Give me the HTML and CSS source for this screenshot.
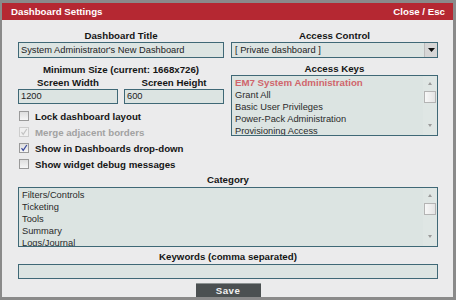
FILE: index.html
```html
<!DOCTYPE html>
<html>
<head>
<meta charset="utf-8">
<link rel="stylesheet" href="styles.css">
</head>
<body>
<div class="dialog">
  <div class="titlebar">
    <span class="title">Dashboard Settings</span>
    <span class="close">Close / Esc</span>
  </div>
  <div class="content">
    <div class="cols">
      <div class="col">
        <div class="label">Dashboard Title</div>
        <div class="field">System Administrator's New Dashboard</div>
        <div class="label minsize">Minimum Size (current: 1668x726)</div>
        <div class="sizes">
          <div class="size">
            <div class="label">Screen Width</div>
            <div class="field small">1200</div>
          </div>
          <div class="size">
            <div class="label">Screen Height</div>
            <div class="field small">600</div>
          </div>
        </div>
        <div class="checks">
          <div class="check"><span class="box"></span><span class="ctext">Lock dashboard layout</span></div>
          <div class="check disabled"><span class="box"><svg width="10" height="10" viewBox="0 0 10 10"><path d="M2.5 5.2 L4.2 7.4 L7.8 2" fill="none" stroke="#c4c4c4" stroke-width="1.2"/></svg></span><span class="ctext">Merge adjacent borders</span></div>
          <div class="check"><span class="box"><svg width="10" height="10" viewBox="0 0 10 10"><path d="M2.5 5.2 L4.2 7.4 L7.8 2" fill="none" stroke="#3a4a9c" stroke-width="1.2"/></svg></span><span class="ctext">Show in Dashboards drop-down</span></div>
          <div class="check"><span class="box"></span><span class="ctext">Show widget debug messages</span></div>
        </div>
      </div>
      <div class="col">
        <div class="label">Access Control</div>
        <div class="select"><span class="selval">[ Private dashboard ]</span><span class="selbtn"><svg width="7" height="4" viewBox="0 0 7 4"><path d="M0 0 H7 L3.5 4 Z" fill="#111"/></svg></span></div>
        <div class="label keyslabel">Access Keys</div>
        <div class="listbox keys">
          <div class="items">
            <div class="item sel">EM7 System Administration</div>
            <div class="item">Grant All</div>
            <div class="item">Basic User Privileges</div>
            <div class="item">Power-Pack Administration</div>
            <div class="item">Provisioning Access</div>
          </div>
          <div class="sbar">
            <span class="arr up"></span>
            <span class="thumb"></span>
            <span class="sfill"></span>
            <span class="arr down"></span>
          </div>
        </div>
      </div>
    </div>
    <div class="label catlabel">Category</div>
    <div class="listbox cat">
      <div class="items">
        <div class="item">Filters/Controls</div>
        <div class="item">Ticketing</div>
        <div class="item">Tools</div>
        <div class="item">Summary</div>
        <div class="item">Logs/Journal</div>
      </div>
      <div class="sbar">
        <span class="arr up"></span>
        <span class="thumb"></span>
        <span class="sfill"></span>
        <span class="arr down"></span>
      </div>
    </div>
    <div class="label kwlabel">Keywords (comma separated)</div>
    <div class="field kw"></div>
    <div class="actions"><button class="save">Save</button></div>
  </div>
</div>
</body>
</html>
```

FILE: styles.css
```css
* { box-sizing: border-box; }
html, body { margin: 0; padding: 0; }
body {
  width: 456px;
  height: 300px;
  font-family: "Liberation Sans", Arial, sans-serif;
  color: #151515;
  background: #ebebeb;
}
.dialog {
  width: 456px;
  height: 300px;
  border: 3px solid #8a8a8a;
  border-left-width: 2px;
  background: #ebebec;
  overflow: hidden;
}
.titlebar {
  height: 17px;
  background: #b52832;
  color: #fff;
  display: flex;
  justify-content: space-between;
  align-items: center;
  padding: 0 8px 0 9px;
  font-weight: bold;
  font-size: 9.7px;
}
.content {
  padding: 10px 15px 0 16px;
}
.cols {
  display: grid;
  grid-template-columns: 206px 207px;
  column-gap: 7px;
}
.label {
  font-weight: bold;
  font-size: 9.7px;
  line-height: 12px;
  height: 12px;
  text-align: center;
  white-space: nowrap;
}
.field {
  height: 16px;
  border: 1px solid #3f6876;
  background: #dce4e2;
  font-size: 9.3px;
  line-height: 14px;
  padding: 0 2px;
  white-space: nowrap;
  overflow: hidden;
  color: #222;
}
.minsize { margin-top: 6px; }
.sizes {
  display: grid;
  grid-template-columns: 100px 100px;
  column-gap: 6px;
}
.size .label { height: 13px; line-height: 13px; }
.field.small { height: 15px; line-height: 13px; }
.checks {
  margin-top: 4px;
  display: flex;
  flex-direction: column;
}
.check {
  height: 16px;
  display: flex;
  align-items: center;
  font-weight: bold;
  font-size: 9.7px;
}
.box {
  width: 10px;
  height: 10px;
  margin-left: 1px;
  border: 1px solid #9a9a9a;
  background: linear-gradient(#dedede, #f6f6f6);
  display: flex;
  align-items: center;
  justify-content: center;
}
.box svg { display: block; flex: none; }
.ctext { margin-left: 6px; }
.check.disabled { color: #a2a2a2; }
.check.disabled .box { border-color: #cdcdcd; background: #f0f0f0; }
.select {
  height: 16px;
  border: 1px solid #3f6876;
  background: #dce4e2;
  display: flex;
  font-size: 9.3px;
  color: #222;
}
.selval {
  flex: 1;
  line-height: 14px;
  padding-left: 3px;
}
.selbtn {
  width: 13px;
  background: #d6d6d6;
  border-left: 1px solid #bcbcbc;
  display: flex;
  align-items: center;
  justify-content: center;
}
.selbtn svg { display: block; }
.keyslabel { margin-top: 5px; }
.listbox {
  border: 1px solid #3f6876;
  background: #dce4e2;
  display: flex;
  overflow: hidden;
}
.keys { height: 61px; }
.cat { height: 60px; margin-top: 1px; }
.catlabel { margin-top: 2px; }
.items {
  flex: 1;
  padding: 1px 3px 0;
  overflow: hidden;
  font-size: 9.3px;
  color: #2a2a2a;
}
.item {
  line-height: 12px;
  height: 12px;
  white-space: nowrap;
}
.item.sel {
  color: #d0666c;
  font-weight: bold;
  font-size: 9.7px;
}
.sbar {
  width: 14px;
  display: flex;
  flex-direction: column;
  align-items: center;
  background: #dfe6e4;
}
.arr {
  width: 0;
  height: 0;
  border-left: 2.5px solid transparent;
  border-right: 2.5px solid transparent;
}
.arr.up {
  margin-top: 6px;
  border-bottom: 3px solid #9a9a9a;
}
.arr.down {
  margin-bottom: 8px;
  border-top: 3px solid #9a9a9a;
}
.thumb {
  margin-top: 6px;
  width: 12px;
  height: 12px;
  border: 1px solid #b4b4b4;
  background: linear-gradient(90deg, #f8f8f8, #e4e4e4);
}
.sfill { flex: 1; }
.kwlabel { margin-top: 4px; }
.field.kw { height: 15px; margin-top: 1px; }
.actions {
  display: flex;
  justify-content: center;
  margin-top: 4px;
}
.save {
  width: 65px;
  height: 14px;
  padding: 0;
  border: none;
  border-top: 1px solid #8d9393;
  background: #4b5051;
  color: #f2f2f2;
  font-family: "Liberation Sans", Arial, sans-serif;
  font-weight: bold;
  font-size: 9.7px;
  letter-spacing: 0.5px;
  line-height: 13px;
}
```
